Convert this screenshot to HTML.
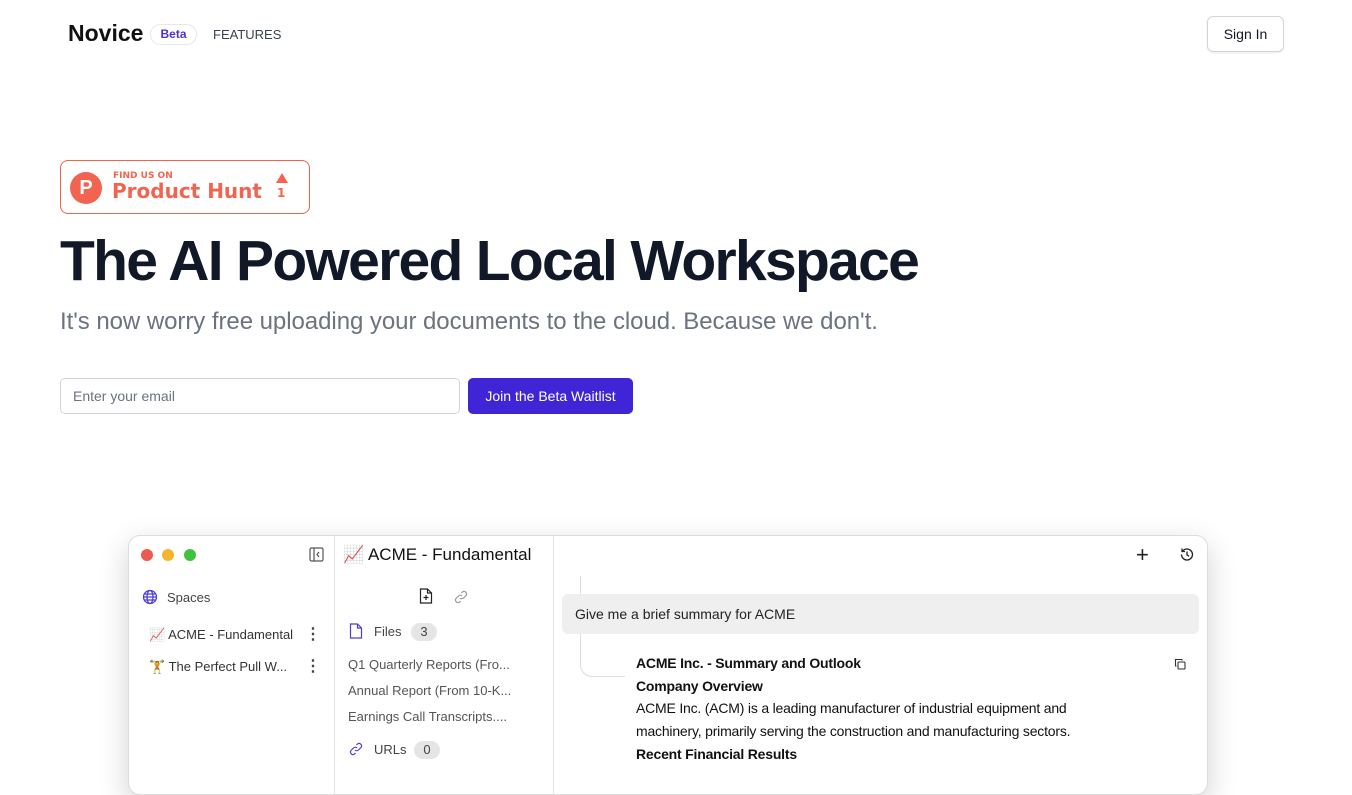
<!DOCTYPE html>
<html><head><meta charset="utf-8"><style>
*{box-sizing:border-box;margin:0;padding:0}
body{width:1352px;height:760px;overflow:hidden;background:#fff;font-family:"Liberation Sans",sans-serif;color:#111827;position:relative}
.a{position:absolute;white-space:nowrap}
</style></head><body>
<div class="a" style="left:68px;top:20px;font-size:23px;font-weight:bold;color:#111">Novice</div>
<div class="a" style="left:150px;top:24px;width:47px;height:21px;border:1px solid #e5e7eb;border-radius:11px;font-size:12px;font-weight:bold;color:#4f2fd8;text-align:center;line-height:19px">Beta</div>
<div class="a" style="left:213px;top:27px;font-size:13px;color:#374151">FEATURES</div>
<div class="a" style="left:1207px;top:16px;width:77px;height:36px;border:1px solid #d1d5db;border-radius:6px;font-size:14px;text-align:center;line-height:34px;box-shadow:0 1px 2px rgba(0,0,0,.08)">Sign In</div>

<div class="a" style="left:60px;top:160px;width:250px;height:54px;border:1px solid #f06449;border-radius:8px"></div>
<div class="a" style="left:70px;top:172px;width:32px;height:32px;border-radius:50%;background:#f26450;color:#fff;font-weight:bold;font-size:20px;text-align:center;line-height:32px">P</div>
<div class="a" style="left:113px;top:171px;font-family:'DejaVu Sans',sans-serif;font-size:9px;font-weight:bold;color:#f26450">FIND US ON</div>
<div class="a" style="left:112px;top:179px;font-family:'DejaVu Sans',sans-serif;font-size:20px;font-weight:bold;color:#f26450">Product Hunt</div>
<div class="a" style="left:276px;top:173px;width:0;height:0;border-left:6px solid transparent;border-right:6px solid transparent;border-bottom:10px solid #f26450"></div>
<div class="a" style="left:277px;top:186px;font-family:'DejaVu Sans',sans-serif;font-size:12px;font-weight:bold;color:#f26450">1</div>

<div class="a" style="left:60px;top:228px;font-size:57px;font-weight:bold;letter-spacing:-1.7px;color:#111827">The AI Powered Local Workspace</div>
<div class="a" style="left:60px;top:308px;font-size:24px;color:#6b7280;letter-spacing:-0.05px">It's now worry free uploading your documents to the cloud. Because we don't.</div>
<div class="a" style="left:60px;top:378px;width:400px;height:36px;border:1px solid #d1d5db;border-radius:5px;font-size:14px;color:#6b7280;line-height:34px;padding-left:12px">Enter your email</div>
<div class="a" style="left:468px;top:378px;width:165px;height:36px;background:#3f25d6;border-radius:5px;font-size:14px;color:#fff;text-align:center;line-height:36px">Join the Beta Waitlist</div>

<div class="a" style="left:128px;top:535px;width:1080px;height:260px;border:1px solid #ddd;border-radius:12px;box-shadow:0 10px 30px rgba(0,0,0,.18);background:#fff;overflow:hidden">
 <div class="a" style="left:205px;top:0;width:1px;height:260px;background:#e5e5e5"></div>
 <div class="a" style="left:424px;top:0;width:1px;height:260px;background:#e5e5e5"></div>
 <div class="a" style="left:12px;top:13px;width:12px;height:12px;border-radius:50%;background:#ee5a52"></div>
 <div class="a" style="left:33px;top:13px;width:12px;height:12px;border-radius:50%;background:#f6b52e"></div>
 <div class="a" style="left:55px;top:13px;width:12px;height:12px;border-radius:50%;background:#3fc23f"></div>
 <svg class="a" style="left:180px;top:11px" width="15" height="15" viewBox="0 0 15 15" fill="none" stroke="#555" stroke-width="1.2"><rect x="1" y="1" width="13" height="13" rx="1.5"/><path d="M5 1v13M10 5l-2 2.5 2 2.5"/></svg>
 <svg class="a" style="left:13px;top:53px" width="16" height="16" viewBox="0 0 16 16" fill="none" stroke="#4f3fd0" stroke-width="1.3"><circle cx="8" cy="8" r="6.5"/><ellipse cx="8" cy="8" rx="3" ry="6.5"/><path d="M1.5 8h13M2.5 5h11M2.5 11h11"/></svg>
 <div class="a" style="left:38px;top:54px;font-size:13px;color:#444">Spaces</div>
 <div class="a" style="left:20px;top:91px;font-size:13px;color:#333">📈 ACME - Fundamental</div>
 <div class="a" style="left:20px;top:123px;font-size:13px;color:#333">🏋 The Perfect Pull W...</div>
 <div class="a" style="left:176px;top:88px;font-size:16px;font-weight:bold;color:#444">⋮</div>
 <div class="a" style="left:176px;top:120px;font-size:16px;font-weight:bold;color:#444">⋮</div>
 <div class="a" style="left:214px;top:9px;font-size:17px;color:#111">📈 ACME - Fundamental</div>
 <svg class="a" style="left:290px;top:52px" width="14" height="16" viewBox="0 0 14 16" fill="none" stroke="#222" stroke-width="1.2"><path d="M1.5 1h7l4 4v10h-11z M8.5 1v4h4 M7 7v5M4.5 9.5h5"/></svg>
 <svg class="a" style="left:325px;top:54px" width="14" height="14" viewBox="0 0 14 14" fill="none" stroke="#999" stroke-width="1.2"><path d="M6 8a2.5 2.5 0 003.5 0l2.5-2.5a2.5 2.5 0 00-3.5-3.5L7.5 3M8 6a2.5 2.5 0 00-3.5 0L2 8.5A2.5 2.5 0 005.5 12l1-1"/></svg>
 <svg class="a" style="left:220px;top:87px" width="14" height="16" viewBox="0 0 14 16" fill="none" stroke="#4f3fd0" stroke-width="1.2"><path d="M1.5 1h7l4 4v10h-11z M8.5 1v4h4"/></svg>
 <div class="a" style="left:245px;top:88px;font-size:13px;color:#444">Files</div>
 <div class="a" style="left:282px;top:87px;width:26px;height:18px;border-radius:9px;background:#e5e5e5;font-size:13px;text-align:center;line-height:18px;color:#444">3</div>
 <div class="a" style="left:219px;top:121px;font-size:13px;color:#555">Q1 Quarterly Reports (Fro...</div>
 <div class="a" style="left:219px;top:147px;font-size:13px;color:#555">Annual Report (From 10-K...</div>
 <div class="a" style="left:219px;top:173px;font-size:13px;color:#555">Earnings Call Transcripts....</div>
 <svg class="a" style="left:220px;top:206px" width="14" height="14" viewBox="0 0 14 14" fill="none" stroke="#4f3fd0" stroke-width="1.2"><path d="M6 8a2.5 2.5 0 003.5 0l2.5-2.5a2.5 2.5 0 00-3.5-3.5L7.5 3M8 6a2.5 2.5 0 00-3.5 0L2 8.5A2.5 2.5 0 005.5 12l1-1"/></svg>
 <div class="a" style="left:245px;top:206px;font-size:13px;color:#444">URLs</div>
 <div class="a" style="left:285px;top:205px;width:26px;height:18px;border-radius:9px;background:#e5e5e5;font-size:13px;text-align:center;line-height:18px;color:#444">0</div>

 <div class="a" style="left:1007px;top:6px;font-size:22px;color:#222">+</div>
 <svg class="a" style="left:1050px;top:11px" width="15" height="15" viewBox="0 0 15 15" fill="none" stroke="#222" stroke-width="1.3"><path d="M2.5 7.5a5.5 5.5 0 105.5-5.5 5.5 5.5 0 00-4.5 2.3M3 1.5v3h3M8 4.5v3.3l2 1.5"/></svg>
 <div class="a" style="left:451px;top:40px;width:1px;height:20px;background:#ddd"></div>
 <div class="a" style="left:433px;top:58px;width:637px;height:40px;background:#efefef;border-radius:6px;font-size:14px;color:#222;line-height:40px;padding-left:13px">Give me a brief summary for ACME</div>
 <div class="a" style="left:451px;top:98px;width:45px;height:43px;border-left:1px solid #ddd;border-bottom:1px solid #ddd;border-bottom-left-radius:12px"></div>
 <div class="a" style="left:507px;top:119px;font-size:14px;font-weight:bold;color:#111;letter-spacing:-0.2px">ACME Inc. - Summary and Outlook</div>
 <svg class="a" style="left:1045px;top:122px" width="12" height="12" viewBox="0 0 12 12" fill="none" stroke="#333" stroke-width="1.1"><rect x="4" y="4" width="7" height="7" rx="1"/><path d="M2.5 8H1.5V1.5H8v1"/></svg>
 <div class="a" style="left:507px;top:142px;font-size:14px;font-weight:bold;color:#111;letter-spacing:-0.2px">Company Overview</div>
 <div class="a" style="left:507px;top:161px;font-size:14px;color:#111;line-height:23px;white-space:normal;width:495px;letter-spacing:-0.2px">ACME Inc. (ACM) is a leading manufacturer of industrial equipment and machinery, primarily serving the construction and manufacturing sectors.</div>
 <div class="a" style="left:507px;top:210px;font-size:14px;font-weight:bold;color:#111;letter-spacing:-0.2px">Recent Financial Results</div>
</div>
</body></html>
